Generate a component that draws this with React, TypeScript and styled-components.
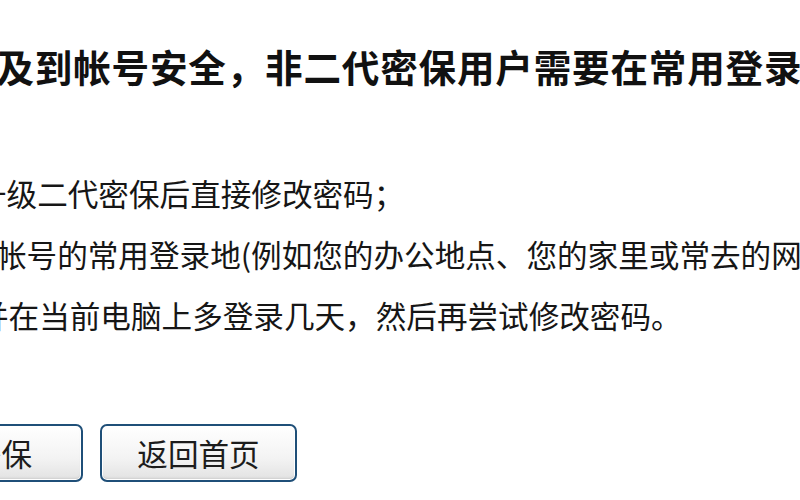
import styled, { createGlobalStyle } from "styled-components";

const GlobalStyle = createGlobalStyle`
  html, body {
    margin: 0;
    padding: 0;
    background: #ffffff;
  }
  body {
    width: 800px;
    height: 500px;
    overflow: hidden;
  }
`;

const Page = styled.div`
  width: 800px;
  height: 500px;
  overflow: hidden;
  padding-top: 42px;
  box-sizing: border-box;
  font-family: "Noto Sans CJK SC", "Noto Sans", sans-serif;
  color: #161616;
`;

const Title = styled.h2`
  margin: 0 0 0 -42px;
  font-size: 37.6px;
  line-height: 48px;
  font-weight: 700;
  letter-spacing: 0.8px;
  color: #111;
  white-space: nowrap;
`;

const Tips = styled.div`
  margin-top: 73px;
`;

const Line = styled.p<{ $shift: number }>`
  margin: 0 0 0 ${(p) => p.$shift}px;
  font-size: 30.6px;
  line-height: 61px;
  white-space: nowrap;
`;

const Actions = styled.div`
  display: flex;
  gap: 17px;
  margin: 78px 0 0 -141px;
`;

const Button = styled.button<{ $width: number }>`
  width: ${(p) => p.$width}px;
  height: 58px;
  flex: none;
  padding: 0;
  border: 2px solid #1f4f78;
  border-radius: 7px;
  background: linear-gradient(#ffffff, #f3f3f3 60%, #e2e2e2);
  box-shadow: inset 0 0 0 1px #ffffff, inset 0 -2px 2px #cfcfcf;
  font-family: "Noto Sans CJK SC", "Noto Sans", sans-serif;
  font-size: 30.6px;
  line-height: 54px;
  color: #1c1c1c;
  cursor: pointer;
`;

export default function App() {
  return (
    <>
      <GlobalStyle />
      <Page>
        <Title>涉及到帐号安全，非二代密保用户需要在常用登录地修改密码</Title>
        <Tips>
          <Line $shift={-24}>升级二代密保后直接修改密码；</Line>
          <Line $shift={-4}>帐号的常用登录地(例如您的办公地点、您的家里或常去的网吧)</Line>
          <Line $shift={-22}>并在当前电脑上多登录几天，然后再尝试修改密码。</Line>
        </Tips>
        <Actions>
          <Button $width={224}>升级密保</Button>
          <Button $width={197}>返回首页</Button>
        </Actions>
      </Page>
    </>
  );
}
